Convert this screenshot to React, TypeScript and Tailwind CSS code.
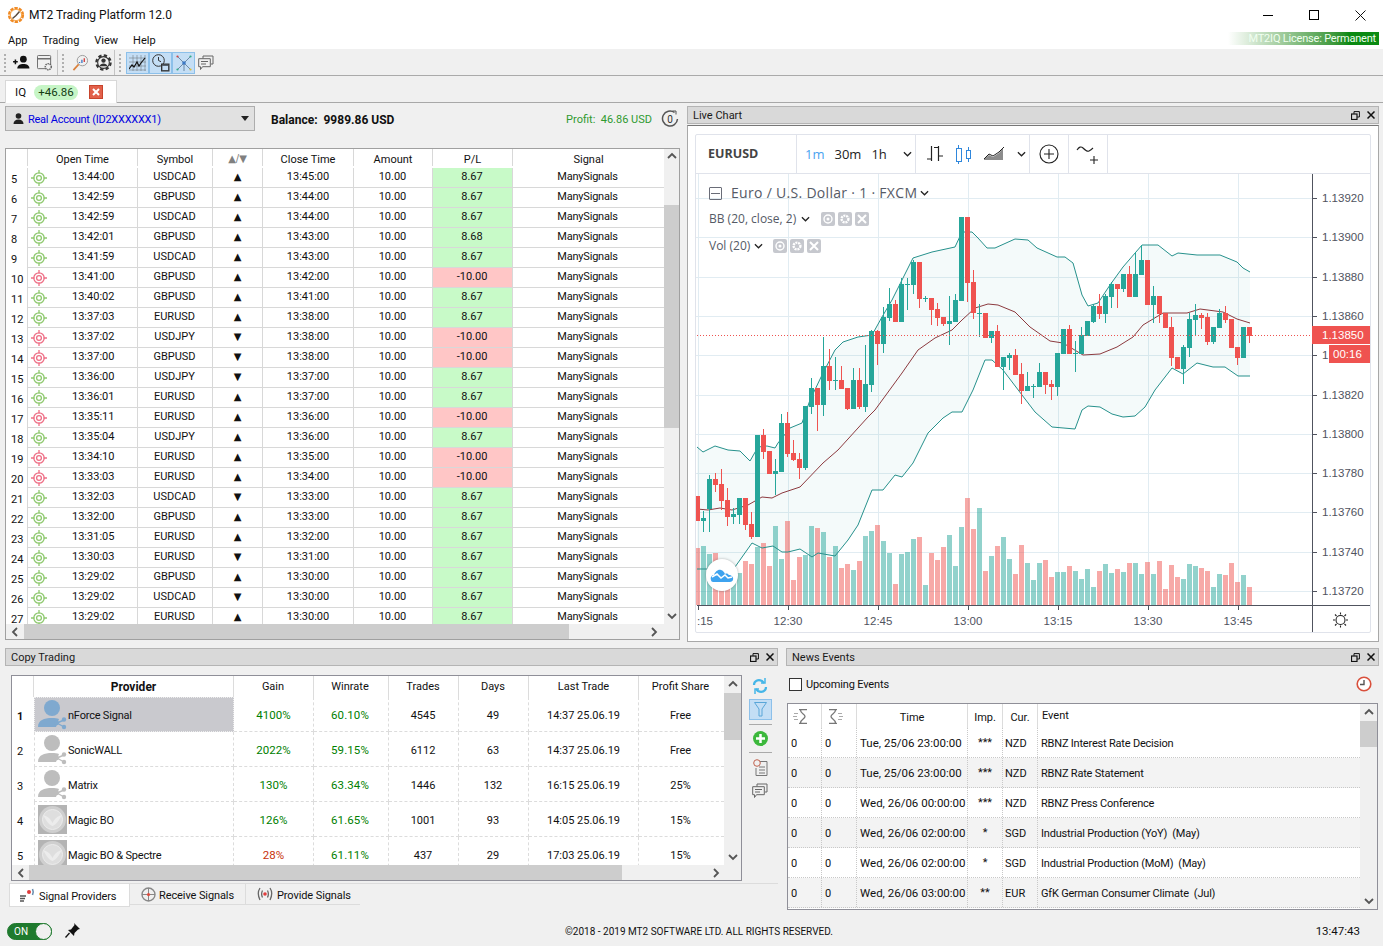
import React from "react";

const trades: [number, string, string, boolean, string, string][] = [
  [5, "13:44:00", "USDCAD", true, "13:45:00", "8.67"],
  [6, "13:42:59", "GBPUSD", true, "13:44:00", "8.67"],
  [7, "13:42:59", "USDCAD", true, "13:44:00", "8.67"],
  [8, "13:42:01", "GBPUSD", true, "13:43:00", "8.68"],
  [9, "13:41:59", "USDCAD", true, "13:43:00", "8.67"],
  [10, "13:41:00", "GBPUSD", true, "13:42:00", "-10.00"],
  [11, "13:40:02", "GBPUSD", true, "13:41:00", "8.67"],
  [12, "13:37:03", "EURUSD", true, "13:38:00", "8.67"],
  [13, "13:37:02", "USDJPY", false, "13:38:00", "-10.00"],
  [14, "13:37:00", "GBPUSD", false, "13:38:00", "-10.00"],
  [15, "13:36:00", "USDJPY", false, "13:37:00", "8.67"],
  [16, "13:36:01", "EURUSD", true, "13:37:00", "8.67"],
  [17, "13:35:11", "EURUSD", true, "13:36:00", "-10.00"],
  [18, "13:35:04", "USDJPY", true, "13:36:00", "8.67"],
  [19, "13:34:10", "EURUSD", true, "13:35:00", "-10.00"],
  [20, "13:33:03", "EURUSD", true, "13:34:00", "-10.00"],
  [21, "13:32:03", "USDCAD", false, "13:33:00", "8.67"],
  [22, "13:32:00", "GBPUSD", true, "13:33:00", "8.67"],
  [23, "13:31:05", "EURUSD", true, "13:32:00", "8.67"],
  [24, "13:30:03", "EURUSD", false, "13:31:00", "8.67"],
  [25, "13:29:02", "GBPUSD", true, "13:30:00", "8.67"],
  [26, "13:29:02", "USDCAD", false, "13:30:00", "8.67"],
  [27, "13:29:02", "EURUSD", true, "13:30:00", "8.67"],
];

const providers = [
  { n: 1, name: "nForce Signal", gain: "4100%", win: "60.10%", trades: "4545", days: "49", last: "14:37 25.06.19", share: "Free", pic: "blue", gainCls: "text-[#008000]" },
  { n: 2, name: "SonicWALL", gain: "2022%", win: "59.15%", trades: "6112", days: "63", last: "14:37 25.06.19", share: "Free", pic: "gray", gainCls: "text-[#008000]" },
  { n: 3, name: "Matrix", gain: "130%", win: "63.34%", trades: "1446", days: "132", last: "16:15 25.06.19", share: "25%", pic: "gray", gainCls: "text-[#008000]" },
  { n: 4, name: "Magic BO", gain: "126%", win: "61.65%", trades: "1001", days: "93", last: "14:05 25.06.19", share: "15%", pic: "magic", gainCls: "text-[#008000]" },
  { n: 5, name: "Magic BO & Spectre", gain: "28%", win: "61.11%", trades: "437", days: "29", last: "17:03 25.06.19", share: "15%", pic: "magic", gainCls: "text-[#c8320a]" },
];

const news = [
  ["Tue, 25/06 23:00:00", "***", "NZD", "RBNZ Interest Rate Decision"],
  ["Tue, 25/06 23:00:00", "***", "NZD", "RBNZ Rate Statement"],
  ["Wed, 26/06 00:00:00", "***", "NZD", "RBNZ Press Conference"],
  ["Wed, 26/06 02:00:00", "*", "SGD", "Industrial Production (YoY)  (May)"],
  ["Wed, 26/06 02:00:00", "*", "SGD", "Industrial Production (MoM)  (May)"],
  ["Wed, 26/06 03:00:00", "**", "EUR", "GfK German Consumer Climate  (Jul)"],
];

// candles: body top, body bottom, wick top, wick bottom, up?
const candles: [number, number, number, number, number][] = [
  [496, 521, 496, 521, 0], [518, 521, 511, 532, 1], [479, 509, 475, 532, 1], [479, 485, 473, 492, 0], [484, 501, 469, 510, 0],
  [500, 517, 488, 526, 0], [514, 517, 508, 524, 1], [498, 515, 498, 524, 1], [498, 525, 498, 530, 0], [524, 537, 512, 539, 0],
  [435, 537, 435, 537, 1], [435, 452, 429, 459, 0], [451, 474, 451, 474, 0], [471, 474, 459, 495, 1], [423, 472, 414, 472, 1],
  [423, 454, 412, 457, 0], [453, 460, 440, 461, 0], [459, 468, 453, 479, 0], [406, 468, 406, 470, 1], [388, 407, 378, 414, 1],
  [388, 405, 388, 431, 0], [366, 405, 337, 416, 1], [366, 381, 349, 390, 0], [380, 381, 357, 390, 1], [380, 389, 366, 389, 0],
  [388, 409, 388, 410, 0], [380, 409, 368, 409, 1], [380, 407, 368, 409, 0], [384, 407, 345, 412, 1], [331, 385, 330, 392, 1],
  [331, 344, 330, 365, 0], [317, 344, 307, 353, 1], [304, 318, 288, 321, 1], [304, 322, 300, 322, 0], [284, 322, 278, 322, 1],
  [284, 285, 278, 310, 1], [262, 285, 260, 294, 1], [262, 299, 262, 308, 0], [298, 299, 296, 302, 1], [298, 310, 298, 325, 0],
  [309, 318, 303, 326, 0], [317, 324, 317, 326, 0], [321, 324, 296, 345, 1], [300, 322, 294, 322, 1], [217, 301, 217, 301, 1],
  [217, 283, 217, 302, 0], [282, 313, 270, 319, 0], [313, 314, 304, 337, 1], [313, 338, 313, 338, 0], [331, 338, 331, 343, 1],
  [331, 367, 325, 367, 0], [357, 367, 357, 390, 1], [355, 358, 353, 370, 1], [355, 375, 349, 375, 0], [374, 391, 363, 404, 0],
  [386, 391, 372, 391, 1], [386, 387, 384, 398, 1], [372, 387, 363, 387, 1], [372, 385, 372, 394, 0], [384, 387, 380, 400, 0],
  [353, 387, 353, 396, 1], [329, 354, 329, 354, 1], [329, 354, 325, 354, 0], [353, 354, 341, 372, 1], [335, 354, 327, 354, 1],
  [321, 336, 321, 336, 1], [306, 322, 304, 323, 1], [306, 314, 294, 319, 0], [296, 314, 294, 323, 1], [284, 297, 282, 308, 1],
  [284, 289, 284, 308, 0], [274, 289, 274, 292, 1], [274, 297, 266, 297, 0], [274, 297, 252, 297, 1], [260, 275, 245, 275, 1],
  [260, 305, 260, 305, 0], [296, 305, 286, 323, 1], [296, 314, 296, 323, 0], [313, 328, 313, 328, 0], [327, 358, 317, 366, 0],
  [357, 369, 357, 369, 0], [347, 369, 345, 384, 1], [319, 348, 313, 357, 1], [315, 320, 304, 336, 1], [315, 318, 313, 329, 0],
  [317, 342, 313, 345, 0], [327, 342, 327, 344, 1], [313, 328, 309, 328, 1], [313, 320, 306, 323, 0], [319, 348, 319, 348, 0],
  [347, 358, 347, 365, 0], [327, 358, 327, 358, 1], [327, 336, 327, 343, 0],
];

const volumeTops = [
  548, 546, 554, 553, 570, 573, 573, 573, 561, 564, 547, 543, 566, 526, 559, 521, 580, 557, 555, 526, 528, 532, 557, 546, 568,
  564, 570, 561, 536, 531, 525, 541, 553, 584, 554, 552, 539, 537, 585, 553, 560, 547, 535, 566, 527, 498, 529, 508, 571, 556,
  546, 537, 559, 574, 545, 563, 580, 563, 560, 577, 572, 572, 566, 571, 579, 569, 587, 571, 564, 573, 569, 572, 563, 563, 574,
  562, 574, 561, 589, 565, 577, 579, 564, 566, 568, 571, 587, 574, 575, 563, 582, 575, 587,
];

const upper = "697,447 703,452 715,446 728,450 740,451 750,461 758,447 767,446 775,448 778,443 790,428 802,423 810,400 823,373 835,350 843,342 858,337 872,335 882,317 892,300 902,280 913,258 932,252 955,247 962,232 972,232 978,238 987,248 995,248 1015,239 1028,240 1037,248 1057,257 1065,257 1073,263 1082,295 1088,306 1098,303 1110,285 1123,267 1142,245 1158,245 1172,256 1178,253 1197,255 1220,255 1237,262 1243,268 1250,272";
const lower = "697,569 710,569 735,567 752,543 762,548 773,546 782,552 788,552 800,549 812,557 818,553 835,556 848,540 858,525 872,490 883,490 895,475 902,477 913,463 928,433 943,418 952,412 962,412 973,390 985,360 992,360 1003,370 1022,395 1035,412 1052,427 1075,429 1082,410 1088,406 1100,407 1112,414 1123,417 1135,416 1145,407 1155,390 1172,368 1183,374 1197,363 1213,367 1225,367 1238,376 1250,376";
const middle = "697,509 708,510 720,508 732,510 748,505 762,497 772,498 782,493 800,487 823,463 838,450 868,417 875,410 902,373 918,350 935,338 952,330 962,320 975,308 988,304 998,305 1015,312 1030,327 1050,341 1063,343 1083,355 1100,354 1117,347 1133,337 1143,325 1163,313 1187,313 1200,309 1223,312 1237,319 1250,323";
const bandFill = upper + " " + lower.split(" ").reverse().join(" ");

const priceTicks: [number, string][] = [
  [198, "1.13920"], [237, "1.13900"], [277, "1.13880"], [316, "1.13860"], [355, "1."], [395, "1.13820"],
  [434, "1.13800"], [473, "1.13780"], [512, "1.13760"], [552, "1.13740"], [591, "1.13720"],
];
const timeTicks: [number, string][] = [
  [698, ":15"], [788, "12:30"], [878, "12:45"], [968, "13:00"], [1058, "13:15"], [1148, "13:30"], [1238, "13:45"],
];

const Target = ({ color }: { color: string }) => (
  <svg width="16" height="16" viewBox="0 0 16 16" fill="none" stroke={color} strokeWidth="1.3">
    <circle cx="8" cy="8" r="5.2" />
    <circle cx="8" cy="8" r="2.4" />
    <path d="M8 0v3.5M8 12.5V16M0 8h3.5M12.5 8H16" />
  </svg>
);

const FloatClose = () => (
  <div className="flex items-center gap-[7px]">
    <svg width="9" height="9" viewBox="0 0 9 9" fill="none" stroke="#111">
      <rect x="0.5" y="3" width="5.5" height="5.5" strokeWidth="1.2" />
      <path d="M3 2.800V.6h5.400v5.400H6.200" />
    </svg>
    <svg width="8" height="8" viewBox="0 0 8 8" stroke="#111" strokeWidth="1.5">
      <path d="M.5.5l7 7M7.500.5l-7 7" />
    </svg>
  </div>
);

const PanelTitle = ({ title }: { title: string }) => (
  <div className="h-[18px] bg-[#d9d9d9] border border-[#b4b4b4] flex items-center justify-between pl-[5px] pr-[3px] text-[#1a1a1a]">
    <span className="pt-[1px]">{title}</span>
    <FloatClose />
  </div>
);

const Chevron = ({ dir }: { dir: "up" | "down" | "left" | "right" }) => {
  const d = { up: "M2 7l4-4 4 4", down: "M2 4l4 4 4-4", left: "M8 2L4 6l4 4", right: "M4 2l4 4-4 4" }[dir];
  return (
    <svg width="12" height="12" viewBox="0 0 12 12" fill="none" stroke="#555" strokeWidth="1.8">
      <path d={d} />
    </svg>
  );
};

const Grip = () => <span className="h-[18px] w-0 border-l-2 border-dotted border-[#b0b0b0]" />;

const Logo = () => (
  <svg width="18" height="18" viewBox="0 0 18 18">
    <circle cx="9" cy="9" r="6.6" fill="none" stroke="#f08a24" strokeWidth="3" strokeDasharray="3.2 1" />
    <circle cx="9" cy="9" r="5.6" fill="#fff" stroke="#f6a64c" strokeWidth="1" />
    <path d="M5.500 12.500L9 9.500l3.500-4" stroke="#5a4a3c" strokeWidth="1.5" fill="none" />
  </svg>
);

const AddUser = () => (
  <svg width="17" height="15" viewBox="0 0 18 16" fill="#111">
    <circle cx="11" cy="4.500" r="3.600" />
    <path d="M4.500 14.500c0-3.600 3-5 6.500-5s6.500 1.400 6.500 5z" />
    <path d="M0 6.500h5v1.600H0zM1.700 4.800h1.600v5H1.700z" />
  </svg>
);

const WindowGear = () => (
  <svg width="16" height="16" viewBox="0 0 17 17" fill="none" stroke="#666">
    <rect x="0.5" y="0.5" width="14" height="14" rx="1" />
    <path d="M0.500 4h14" strokeWidth="1.500" />
    <circle cx="12" cy="12.500" r="3.200" fill="#f0f0f0" strokeWidth="1.600" strokeDasharray="1.500 .8" />
  </svg>
);

const SearchChart = () => (
  <svg width="17" height="17" viewBox="0 0 18 18" fill="none">
    <circle cx="11" cy="7" r="5.500" stroke="#999" />
    <path d="M7 11l-5.500 6" stroke="#d9803c" strokeWidth="1.800" />
    <path d="M8 8.500v1M10.500 6v3.500" stroke="#3b78c4" strokeWidth="1.400" />
    <path d="M13 4.500v4" stroke="#d43c3c" strokeWidth="1.400" />
  </svg>
);

const UserGear = () => (
  <svg width="17" height="17" viewBox="0 0 18 18">
    <circle cx="9" cy="9" r="7.500" fill="none" stroke="#333" strokeWidth="2.400" strokeDasharray="3.500 2.400" />
    <circle cx="9" cy="9" r="6.200" fill="#f0f0f0" stroke="#333" strokeWidth="1.200" />
    <circle cx="9" cy="7" r="2.300" fill="#333" />
    <path d="M4.800 13c.6-2 2.200-3 4.200-3s3.600 1 4.200 3z" fill="#333" />
  </svg>
);

const ChartBtn = () => (
  <svg width="17" height="16" viewBox="0 0 17 16" fill="none">
    <path d="M4 0v16M8 0v16M12 0v16M16 0v16M0 3h17M0 7h17M0 11h17M0 15h17" stroke="#777d85" strokeWidth=".6" />
    <path d="M0 14l3-4 2 2 3-5 2 4 2-3 4-5" stroke="#111" strokeWidth="1.200" />
  </svg>
);

const ClockBtn = () => (
  <svg width="18" height="18" viewBox="0 0 18 18" fill="none" stroke="#333">
    <circle cx="6.500" cy="6.500" r="5.800" strokeWidth="1" />
    <path d="M6.500 3v3.500l2.500 1.200" />
    <rect x="9.500" y="10" width="7.500" height="7" fill="#56626e" stroke="#333" />
    <rect x="10.500" y="12" width="5.500" height="4" fill="#c4def5" stroke="none" />
  </svg>
);

const NetBtn = () => (
  <svg width="18" height="18" viewBox="0 0 18 18" fill="none">
    <path d="M2 2l14 14M16 2L2 16M9 9v8" stroke="#6d89a6" strokeWidth="1" />
    <circle cx="9" cy="9" r="1.800" fill="#3b78c4" />
    <circle cx="2.500" cy="2.500" r="1.100" fill="#c44" />
    <circle cx="15.500" cy="2.500" r="1.100" fill="#3a8" />
    <circle cx="2.500" cy="15.500" r="1.100" fill="#3a8" />
    <circle cx="15.500" cy="15.500" r="1.100" fill="#db3" />
  </svg>
);

const ChatIcon = ({ size = 16 }: { size?: number }) => (
  <svg width={size} height={size} viewBox="0 0 16 16" fill="none" stroke="#666">
    <path d="M5 3.500V1h10v8h-2" />
    <path d="M.7 3.700h11.600v8H4.500L2.500 14.500v-2.800H.7z" fill="#f0f0f0" />
    <path d="M3 6.500h7M3 9h5" />
  </svg>
);

const TrashTile = ({ kind }: { kind: "eye" | "gear" | "x" }) => (
  <span className="w-[14px] h-[14px] rounded-[2px] bg-[#c6c8ce] flex items-center justify-center">
    <svg width="12" height="12" viewBox="0 0 12 12" fill="none" stroke="#fff" strokeWidth="2">
      {kind === "eye" && <><circle cx="6" cy="6" r="4" strokeWidth="1.400" /><circle cx="6" cy="6" r="1.500" fill="#fff" stroke="none" /></>}
      {kind === "gear" && <circle cx="6" cy="6" r="3.400" strokeWidth="2.400" strokeDasharray="2 .8" />}
      {kind === "x" && <path d="M2 2l8 8M10 2l-8 8" />}
    </svg>
  </span>
);

const Caret = () => (
  <svg width="9" height="6" viewBox="0 0 10 6" fill="none" stroke="#222" strokeWidth="1.400">
    <path d="M1 1l4 4 4-4" />
  </svg>
);

const ProviderPic = ({ kind }: { kind: string }) => {
  if (kind === "magic") {
    return (
      <svg width="29" height="29" viewBox="0 0 29 29" className="shrink-0">
        <rect width="29" height="29" fill="#b4b4b4" />
        <circle cx="14.500" cy="14.500" r="13.500" fill="#cfcfcf" />
        <circle cx="14.500" cy="14.500" r="10" fill="#dedede" stroke="#ececec" />
        <path d="M5 10c4 1 7 3 9.500 8 2.500-5 5.500-7 9.500-8-3 5-5 9-9.500 11C10 19 8 15 5 10z" fill="#ececec" />
      </svg>
    );
  }
  const c = kind === "blue" ? "#7fa9cf" : "#bdbdbd";
  return (
    <svg width="29" height="31" viewBox="0 0 29 31" fill={c} className="shrink-0">
      <circle cx="14" cy="9" r="8" />
      <path d="M0 28c0-7 6-9 14-9 3 0 5 .3 7 1l-3 8z" />
      <path d="M19 24l7-3M19 24l7 4" stroke={c} strokeWidth="1.400" />
      <circle cx="18.500" cy="24" r="2.400" />
      <circle cx="26" cy="20.500" r="2.200" />
      <circle cx="26" cy="28" r="2.200" />
    </svg>
  );
};

const Hourglass = ({ flip }: { flip?: boolean }) => (
  <svg width="16" height="15" viewBox="0 0 16 15" fill="none" stroke="#777" className={flip ? "-scale-x-100" : ""}>
    <path d="M6 .5h8M6 14.500h8M7.500 1c0 4 4.500 4 4.500 6.500S7.500 10 7.500 14" strokeWidth="1.300" />
    <path d="M0 7.500h4M1 4.500h4M1 10.500h4" stroke="#aaa" />
  </svg>
);

function CandleChart() {
  return (
    <svg width="674" height="458" viewBox="696 174 674 458" className="block font-['Liberation_Sans',sans-serif]">
      <g stroke="#e1ecf2" strokeWidth="1">
        {priceTicks.map(([y]) => <path key={y} d={`M696 ${y + 0.5}H1312`} />)}
        {timeTicks.map(([x]) => <path key={x} d={`M${x + 0.5} 174V605`} />)}
      </g>
      <polygon points={bandFill} fill="#26a69a" fillOpacity="0.05" />
      {volumeTops.map((top, i) => (
        <rect key={i} x={695 + 6 * i} y={top} width="5" height={605 - top} fill={candles[i][4] ? "#26a69a" : "#ef5350"} fillOpacity="0.5" />
      ))}
      <polyline points={upper} fill="none" stroke="#26918c" strokeWidth="1" />
      <polyline points={lower} fill="none" stroke="#26918c" strokeWidth="1" />
      <polyline points={middle} fill="none" stroke="#8c3a3f" strokeWidth="1" />
      {candles.map(([top, bottom, wt, wb, up], i) => {
        const c = up ? "#26a69a" : "#ef5350";
        return (
          <g key={i} fill={c}>
            <rect x={697 + 6 * i} y={wt} width="1" height={wb - wt} />
            <rect x={695 + 6 * i} y={top} width="5" height={Math.max(bottom - top, 1)} />
          </g>
        );
      })}
      <path d="M697 335.500H1312" stroke="#ef5350" strokeDasharray="1 2" />
      <path d="M1312.500 174V632M697 605.500H1370" stroke="#50535e" />
      {priceTicks.map(([y, t]) => (
        <g key={t}>
          <path d={`M1312 ${y + 0.5}h5`} stroke="#50535e" />
          <text x="1322" y={y + 3.500} fontSize="11.500" fill="#50535e">{t}</text>
        </g>
      ))}
      {timeTicks.map(([x, t]) => (
        <g key={t}>
          <path d={`M${x + 0.5} 605v5`} stroke="#50535e" />
          <text x={t === ":15" ? 697 : x} y="625" fontSize="11.500" fill="#50535e" textAnchor={t === ":15" ? "start" : "middle"}>{t}</text>
        </g>
      ))}
      <rect x="1312" y="326" width="58" height="18" fill="#ef5350" />
      <text x="1322" y="339" fontSize="11.500" fill="#fff">1.13850</text>
      <rect x="1329" y="345" width="41" height="18" fill="#ef5350" />
      <text x="1333" y="358" fontSize="11.500" fill="#fff">00:16</text>
      <g fill="none" stroke="#222" strokeWidth="1.100">
        <circle cx="1340.500" cy="620" r="4.500" />
        <path d="M1340.500 612.500v2M1340.500 625.500v2M1333 620h2M1346 620h2M1335 614.500l1.500 1.500M1346 614.500l-1.500 1.500M1335 625.500l1.500-1.500M1346 625.500l-1.500-1.500" />
      </g>
    </svg>
  );
}

export default function App() {
  return (
    <div className="w-[1383px] h-[946px] overflow-hidden flex flex-col bg-[#f0f0f0] font-['Roboto',sans-serif] text-[11px] leading-none text-[#111]">
      {/* title + menu */}
      <div className="h-[30px] bg-white flex items-center">
        <div className="ml-[7px] mr-[4px]"><Logo /></div>
        <span className="text-[12px]">MT2 Trading Platform 12.0</span>
        <div className="ml-auto flex items-center">
          <span className="w-[46px] flex justify-center"><span className="w-[10px] h-px bg-black" /></span>
          <span className="w-[46px] flex justify-center"><span className="w-[10px] h-[10px] border border-black" /></span>
          <span className="w-[46px] flex justify-center">
            <svg width="11" height="11" viewBox="0 0 11 11" stroke="#111"><path d="M.5.5l10 10M10.500.5l-10 10" /></svg>
          </span>
        </div>
      </div>
      <div className="h-[19px] bg-white flex items-center pl-[8px] pt-[2px] gap-[15px] relative">
        <span>App</span><span>Trading</span><span>View</span><span>Help</span>
        <div className="absolute right-[4px] top-[2px] h-[13px] w-[151px] bg-gradient-to-r from-white to-[#0a8a12] to-[80%] text-[#f0fff0] text-right pr-[3px] leading-[13px] tracking-[-0.2px]">MT2IQ License: Permanent</div>
      </div>
      {/* toolbar */}
      <div className="h-[26px] mt-px border-b border-[#aaa] flex items-center">
        <div className="flex items-center pl-[4px] w-[58px] h-full border-r border-[#c4c4c4]">
          <Grip />
          <span className="ml-[7px] mr-[7px]"><AddUser /></span>
          <WindowGear />
        </div>
        <div className="flex items-center pl-[4px] w-[57px] h-full border-r border-[#c4c4c4]">
          <Grip />
          <span className="ml-[8px] mr-[6px]"><SearchChart /></span>
          <UserGear />
        </div>
        <div className="flex items-center pl-[4px]">
          <Grip />
          <span className="ml-[5px] w-[23px] h-[22px] bg-[#c4def5] border border-[#8cc0ea] flex items-center justify-center"><ChartBtn /></span>
          <span className="w-[23px] h-[22px] bg-[#c4def5] border border-[#8cc0ea] flex items-center justify-center"><ClockBtn /></span>
          <span className="w-[23px] h-[22px] bg-[#c4def5] border border-[#8cc0ea] flex items-center justify-center"><NetBtn /></span>
          <span className="w-[22px] h-[22px] flex items-center justify-center"><ChatIcon /></span>
        </div>
      </div>
      {/* tab strip */}
      <div className="h-[27px] border-b border-[#a8a8a8] flex items-end pl-[5px]">
        <div className="w-[112px] h-[23px] bg-white border-x border-t border-[#d8d8d8] flex items-center pl-[9px] -mb-px">
          <span className="w-[12px] pt-[2px] text-[11.500px]">IQ</span>
          <span className="ml-[7px] h-[15px] w-[44px] rounded-full bg-[#c6f5c6] flex items-center justify-center pt-[1px] text-[#143c14] text-[11.500px]">+46.86</span>
          <span className="ml-[11px] w-[14px] h-[14px] bg-[#e2604a] border border-[#c8442c] flex items-center justify-center">
            <svg width="8" height="8" viewBox="0 0 8 8" stroke="#fff" strokeWidth="2"><path d="M1 1l6 6M7 1L1 7" /></svg>
          </span>
        </div>
      </div>

      {/* top row */}
      <div className="h-[540px] flex pl-[5px]">
        <div className="w-[675px] pt-[3px] mr-[7px]">
          <div className="flex items-center h-[25px]">
            <div className="w-[250px] h-full bg-[#e1e1e1] border border-[#adadad] flex items-center pl-[7px] text-[#0000e0]">
              <svg width="11" height="11" viewBox="0 0 11 11" fill="#222" className="mr-[4px]"><circle cx="5.500" cy="3" r="2.800" /><path d="M.5 11c0-3 2-4.500 5-4.500s5 1.500 5 4.500z" /></svg>
              <span className="pt-[2px] tracking-[-0.25px]">Real Account (ID2XXXXXX1)</span>
              <span className="ml-auto mr-[5px] border-x-[4px] border-x-transparent border-t-[5px] border-t-[#222]" />
            </div>
            <span className="ml-[16px] pt-[2px] font-bold text-[12px]">Balance:&nbsp; 9989.86 USD</span>
            <span className="ml-auto pt-[2px] text-[#2f9a2f]">Profit:&nbsp; 46.86 USD</span>
            <svg width="18" height="18" viewBox="0 0 18 18" fill="none" stroke="#555" className="ml-[9px] mr-[1px]">
              <path d="M13.500 2.500A7.500 7.500 0 1 0 16.500 9" strokeWidth="1.500" />
              <path d="M11.500 1h3.500v3.500" strokeWidth="1" />
              <text x="9" y="12.500" fontSize="10" textAnchor="middle" fill="#333" stroke="none">0</text>
            </svg>
          </div>
          <div className="mt-[17px] h-[492px] border border-[#a0a0a0] bg-white flex flex-col overflow-hidden">
            <div className="flex-1 flex min-h-0">
              <div className="flex-1 overflow-hidden">
                <div className="flex h-[19px] items-end pb-[2px]">
                  <span className="w-[22px] self-stretch border-r border-[#d8d8d8]" />
                  <span className="w-[110px] text-center self-stretch border-r border-[#d8d8d8] pt-[5px]">Open Time</span>
                  <span className="w-[75px] text-center self-stretch border-r border-[#d8d8d8] pt-[5px]">Symbol</span>
                  <span className="w-[50px] text-center self-stretch border-r border-[#d8d8d8] pt-[5px] text-[#808080] font-['DejaVu_Sans',sans-serif] text-[10px]">▲/▼</span>
                  <span className="w-[91px] text-center self-stretch border-r border-[#d8d8d8] pt-[5px]">Close Time</span>
                  <span className="w-[79px] text-center self-stretch border-r border-[#d8d8d8] pt-[5px]">Amount</span>
                  <span className="w-[80px] text-center self-stretch border-r border-[#d8d8d8] pt-[5px]">P/L</span>
                  <span className="w-[151px] text-center self-stretch pt-[5px]">Signal</span>
                </div>
                {trades.map(([n, open, sym, up, close, pl]) => (
                  <div key={n} className="flex h-[20px] leading-[18px]">
                    <span className="w-[22px] pl-[5px] pt-[6px] leading-[11px] border-r border-[#d8d8d8]">{n}</span>
                    <span className="w-[110px] border-r border-b border-[#d8d8d8] flex">
                      <span className="ml-[3px] mt-[2px] w-[16px]"><Target color={pl.startsWith("-") ? "#ee6f86" : "#8fc96f"} /></span>
                      <span className="ml-[25px]">{open}</span>
                    </span>
                    <span className="w-[75px] pr-[1px] text-center border-r border-b border-[#d8d8d8]">{sym}</span>
                    <span className="w-[50px] text-center border-r border-b border-[#d8d8d8] text-[10px] font-['DejaVu_Sans',sans-serif]">{up ? "▲" : "▼"}</span>
                    <span className="w-[91px] text-center border-r border-b border-[#d8d8d8]">{close}</span>
                    <span className="w-[79px] pr-[1px] text-center border-r border-b border-[#d8d8d8]">10.00</span>
                    <span className={`w-[80px] pr-[1px] text-center border-r border-b border-[#d8d8d8] ${pl.startsWith("-") ? "bg-[#ffc6c6]" : "bg-[#c8fac8]"}`}>{pl}</span>
                    <span className="w-[151px] pr-[2px] text-center border-b border-[#d8d8d8] tracking-[-0.2px]">ManySignals</span>
                  </div>
                ))}
              </div>
              <div className="w-[15px] bg-[#f0f0f0] flex flex-col items-center">
                <div className="h-[14px] mt-[1px] flex items-center"><Chevron dir="up" /></div>
                <div className="mt-[41px] w-full h-[223px] bg-[#cdcdcd]" />
                <div className="mt-auto h-[16px] flex items-center"><Chevron dir="down" /></div>
              </div>
            </div>
            <div className="h-[15px] bg-[#f0f0f0] flex items-center">
              <span className="w-[18px] flex justify-center"><Chevron dir="left" /></span>
              <span className="w-[545px] h-full bg-[#cdcdcd]" />
              <span className="ml-auto mr-[19px]"><Chevron dir="right" /></span>
            </div>
          </div>
        </div>

        <div className="w-[692px] pt-[3px]">
          <PanelTitle title="Live Chart" />
          <div className="mt-px h-[517px] border border-[#a8a8a8] border-t-[#777] bg-white pt-[8px] pl-[7px]">
            <div className="w-[676px] h-[499px] border border-[#e0e3eb] rounded-[2px] flex flex-col font-['Open_Sans',sans-serif]">
              <div className="h-[39px] border-b border-[#e0e3eb] flex items-stretch text-[13px] text-[#222]">
                <div className="w-[101px] border-r border-[#e0e3eb] flex items-center pl-[12px] font-bold text-[#444] text-[12.500px]">EURUSD</div>
                <div className="w-[119px] border-r border-[#e0e3eb] flex items-center pl-[8px] gap-[10px]">
                  <span className="text-[#4aa3f0]">1m</span><span>30m</span><span>1h</span>
                  <span className="ml-[6px]"><Caret /></span>
                </div>
                <div className="w-[114px] border-r border-[#e0e3eb] flex items-center pl-[10px]">
                  <svg width="78" height="20" viewBox="0 0 78 20" fill="none">
                    <path d="M5.500 2v15M1 15h4.500M12.500 2v15M8 3.500h4.500M12.500 12H17" stroke="#222" strokeWidth="1.200" />
                    <path d="M32.500 1v19M42.500 3v15" stroke="#2f87dc" />
                    <rect x="30.500" y="4.500" width="5" height="13" fill="#fff" stroke="#2f87dc" />
                    <rect x="40.500" y="6.500" width="4" height="8" fill="#fff" stroke="#2f87dc" />
                    <path d="M58 15l5-4 4 2 6-4 4-5v12H58z" fill="#8c8c8c" />
                    <path d="M58 15l5-5 4 2 6-4 5-5" stroke="#222" />
                  </svg>
                  <span className="ml-[13px]"><Caret /></span>
                </div>
                <div className="w-[39px] border-r border-[#e0e3eb] flex items-center justify-center">
                  <svg width="20" height="20" viewBox="0 0 20 20" fill="none" stroke="#222" strokeWidth="1.100"><circle cx="10" cy="10" r="9" /><path d="M10 5v10M5 10h10" /></svg>
                </div>
                <div className="w-[39px] border-r border-[#e0e3eb] flex items-center justify-center">
                  <svg width="24" height="20" viewBox="0 0 24 20" fill="none" stroke="#222" strokeWidth="1.100"><path d="M1 6c2-3 4-4 6-2s4 4 6 3 3-2 4-3" /><path d="M18 12v8M14 16h8" /></svg>
                </div>
              </div>
              <div className="relative flex-1">
                <CandleChart />
                <div className="absolute left-[13px] top-[12px] flex items-center text-[14px] text-[#555a66] tracking-[0.3px]">
                  <span className="w-[13px] h-[13px] border border-[#6a6d78] rounded-[1px] flex items-center justify-center mr-[9px]"><span className="w-[9px] h-px bg-[#6a6d78]" /></span>
                  <span className="whitespace-pre">Euro / U.S. Dollar · 1 · FXCM</span>
                  <span className="ml-[3px]"><Caret /></span>
                </div>
                <div className="absolute left-[13px] top-[38px] flex items-center text-[12px] text-[#555a66]">
                  <span>BB (20, close, 2)</span>
                  <span className="ml-[5px] mr-[11px]"><Caret /></span>
                  <span className="flex gap-[3px]"><TrashTile kind="eye" /><TrashTile kind="gear" /><TrashTile kind="x" /></span>
                </div>
                <div className="absolute left-[13px] top-[65px] flex items-center text-[12px] text-[#555a66]">
                  <span>Vol (20)</span>
                  <span className="ml-[4px] mr-[10px]"><Caret /></span>
                  <span className="flex gap-[3px]"><TrashTile kind="eye" /><TrashTile kind="gear" /><TrashTile kind="x" /></span>
                </div>
                <div className="absolute left-[10px] top-[385px] w-[32px] h-[32px] rounded-full bg-white shadow-[0_0_3px_rgba(0,0,0,0.3)] flex items-center justify-center">
                  <svg width="24" height="14" viewBox="0 0 24 14" fill="#3ea3ef">
                    <path d="M1 12c-1-3 1-5 3-5 1-3 4-6 7-5 2 .5 3 2 4 4 2-1 3 0 4 1 2 0 5 2 4 5-.5 1-2 2-3 2H3c-1 0-2-1-2-2z" />
                    <path d="M2 9l5-3 4 4 4-3 3 3 4-1" fill="none" stroke="#fff" strokeWidth="1.500" />
                  </svg>
                </div>
              </div>
            </div>
          </div>
        </div>
      </div>

      {/* bottom row */}
      <div className="h-[272px] flex pl-[5px] pt-[5px]">
        <div className="w-[773px] mr-[8px]">
          <PanelTitle title="Copy Trading" />
          <div className="flex mt-[9px] ml-[6px]">
            <div className="w-[731px] h-[206px] shrink-0 border border-[#8f8f98] bg-white flex flex-col overflow-hidden">
              <div className="flex-1 flex min-h-0">
                <div className="flex-1 overflow-hidden">
                  <div className="flex h-[21px] items-center">
                    <span className="w-[22px] self-stretch border-r border-[#dcdcdc]" />
                    <span className="w-[200px] text-center font-bold text-[12px] self-stretch pt-[5px] border-r border-[#dcdcdc]">Provider</span>
                    <span className="w-[80px] pr-[1px] text-center self-stretch pt-[5px] border-r border-[#dcdcdc]">Gain</span>
                    <span className="w-[75px] pr-[2px] text-center self-stretch pt-[5px] border-r border-[#dcdcdc]">Winrate</span>
                    <span className="w-[70px] pr-[1px] text-center self-stretch pt-[5px] border-r border-[#dcdcdc]">Trades</span>
                    <span className="w-[70px] pr-[1px] text-center self-stretch pt-[5px] border-r border-[#dcdcdc]">Days</span>
                    <span className="w-[110px] text-center self-stretch pt-[5px] border-r border-[#dcdcdc]">Last Trade</span>
                    <span className="w-[85px] pr-[2px] text-center self-stretch pt-[5px]">Profit Share</span>
                  </div>
                  {providers.map((p) => (
                    <div key={p.n} className="flex h-[35px] items-stretch">
                      <span className={`w-[22px] pl-[5px] pt-[3px] flex items-center ${p.n === 1 ? "font-bold" : ""}`}>{p.n}</span>
                      <span className={`w-[200px] flex items-center gap-[1px] pl-[3px] overflow-hidden ${p.n === 1 ? "bg-[#c9c9ce] border border-dotted border-[#eee]" : "border-x border-b border-dashed border-[#dcdcdc]"}`}>
                        <ProviderPic kind={p.pic} />
                        <span className="pt-[2px] tracking-[-0.2px]">{p.name}</span>
                      </span>
                      <span className={`w-[80px] pt-[3px] flex items-center justify-center text-[11.500px] border-r border-b border-dashed border-[#dcdcdc] ${p.gainCls}`}>{p.gain}</span>
                      <span className="w-[75px] pt-[3px] pr-[2px] flex items-center justify-center text-[11.500px] tracking-[0.1px] border-r border-b border-dashed border-[#dcdcdc] text-[#008000]">{p.win}</span>
                      <span className="w-[70px] pt-[3px] pr-[1px] flex items-center justify-center border-r border-b border-dashed border-[#dcdcdc]">{p.trades}</span>
                      <span className="w-[70px] pt-[3px] pr-[1px] flex items-center justify-center border-r border-b border-dashed border-[#dcdcdc]">{p.days}</span>
                      <span className="w-[110px] pt-[3px] flex items-center justify-center border-r border-b border-dashed border-[#dcdcdc]">{p.last}</span>
                      <span className="w-[85px] pt-[3px] pr-[2px] flex items-center justify-center border-b border-dashed border-[#dcdcdc]">{p.share}</span>
                    </div>
                  ))}
                </div>
                <div className="w-[17px] bg-[#f0f0f0] flex flex-col items-center">
                  <div className="h-[17px] flex items-center"><Chevron dir="up" /></div>
                  <div className="w-full h-[47px] bg-[#cdcdcd]" />
                  <div className="mt-auto h-[17px] flex items-center"><Chevron dir="down" /></div>
                </div>
              </div>
              <div className="h-[15px] bg-[#f0f0f0] flex items-center">
                <span className="w-[17px] flex justify-center"><Chevron dir="left" /></span>
                <span className="w-[593px] h-full bg-[#cdcdcd]" />
                <span className="ml-auto mr-[19px]"><Chevron dir="right" /></span>
              </div>
            </div>
            <div className="w-[36px] flex flex-col items-center">
              <svg width="16" height="18" viewBox="0 0 16 18" fill="none" stroke="#45b6e8" strokeWidth="2.200" className="mt-[2px]">
                <path d="M2 8c0-4 4-6 8-4l2 2M14 10c0 4-4 6-8 4l-2-2" />
                <path d="M13 1v5H9M3 17v-5h4" strokeWidth="1.500" />
              </svg>
              <span className="mt-[4px] w-[23px] h-[21px] bg-[#c4def5] border border-[#8cc0ea] flex items-center justify-center">
                <svg width="13" height="15" viewBox="0 0 13 15" fill="none" stroke="#5aa6d8"><path d="M.5.500h12L8 7v7H5V7z" /></svg>
              </span>
              <span className="mt-[4px] w-[23px] h-px bg-[#aaa]" />
              <span className="mt-[6px] w-[15px] h-[15px] rounded-full bg-[#3cb83c] text-white flex items-center justify-center">
                <svg width="9" height="9" viewBox="0 0 9 9" stroke="#fff" strokeWidth="2.500"><path d="M4.500 0v9M0 4.500h9" /></svg>
              </span>
              <span className="mt-[6px] w-[23px] h-px bg-[#aaa]" />
              <svg width="15" height="17" viewBox="0 0 15 17" fill="none" stroke="#777" className="mt-[6px]">
                <path d="M4 2.500h10v14H3V9M6 8h6M6 11h6M6 14h6" />
                <circle cx="4" cy="4" r="3.300" stroke="#c0604c" fill="#f0f0f0" />
              </svg>
              <span className="mt-[7px]"><ChatIcon size={16} /></span>
            </div>
          </div>
          <div className="flex mt-[2px] ml-[4px] h-[25px] relative">
            <div className="w-[121px] h-[24px] bg-white border border-[#dcdcdc] flex items-center pl-[10px] gap-[3px]">
              <svg width="16" height="14" viewBox="0 0 16 14" fill="none" stroke="#555" strokeWidth="1.600"><path d="M0 8h6M0 10.500h5M0 13h4" /><circle cx="9" cy="4" r="2" fill="#e03c3c" stroke="none" /><path d="M12.500 1c1 2 1 4 0 6" stroke="#6a8fb0" /></svg>
              <span className="pt-[3px] tracking-[-0.1px]">Signal Providers</span>
            </div>
            <div className="w-[116px] h-[22px] border-t border-r border-b border-[#dcdcdc] flex items-center pl-[11px] gap-[3px]">
              <svg width="15" height="15" viewBox="0 0 15 15" fill="none" stroke="#888"><circle cx="7.500" cy="7.500" r="6.500" strokeWidth="1.400" /><path d="M7.500 1v13M1 7.500h13" /><circle cx="7.500" cy="7.500" r="1.600" fill="#e04a3c" stroke="none" /></svg>
              <span className="pt-[3px] tracking-[-0.1px]">Receive Signals</span>
            </div>
            <div className="w-[114px] h-[22px] border-t border-b border-[#dcdcdc] flex items-center pl-[11px] gap-[4px]">
              <svg width="16" height="14" viewBox="0 0 16 14" fill="none" stroke="#666" strokeWidth="1.300"><path d="M3 1C1 4 1 9 3 13M13 1c2 3 2 8 0 12M5.500 3.500c-1 2-1 5 0 7M10.500 3.500c1 2 1 5 0 7" /><circle cx="8" cy="7" r="1.800" fill="#e03c3c" stroke="none" /></svg>
              <span className="pt-[3px] tracking-[-0.1px]">Provide Signals</span>
            </div>
            <div className="flex-1 h-px bg-[#dcdcdc]" />
          </div>
        </div>

        <div className="w-[593px]">
          <PanelTitle title="News Events" />
          <div className="h-[37px] flex items-center pl-[3px] pr-[7px] pb-[1px]">
            <span className="w-[13px] h-[13px] border border-[#333] bg-white mr-[4px]" />
            <span className="tracking-[-0.15px]">Upcoming Events</span>
            <svg width="16" height="16" viewBox="0 0 16 16" fill="none" className="ml-auto">
              <circle cx="8" cy="8" r="6.800" stroke="#d9503c" strokeWidth="1.600" fill="#fff" />
              <path d="M8 4v4.500H4" stroke="#555" strokeWidth="1.400" />
            </svg>
          </div>
          <div className="ml-[1px] w-[591px] h-[207px] border border-[#8f8f98] bg-white flex">
            <div className="flex-1 overflow-hidden">
              <div className="flex h-[24px]">
                <span className="w-[34px] border-r border-[#dcdcdc] flex items-center pl-[5px]"><Hourglass /></span>
                <span className="w-[35px] border-r border-[#dcdcdc] flex items-center pl-[5px]"><Hourglass flip /></span>
                <span className="w-[111px] border-r border-[#dcdcdc] text-center pt-[8px]">Time</span>
                <span className="w-[35px] border-r border-[#dcdcdc] text-center pt-[8px]">Imp.</span>
                <span className="w-[35px] border-r border-[#dcdcdc] text-center pt-[8px]">Cur.</span>
                <span className="pl-[4px] pt-[6px]">Event</span>
              </div>
              {news.map(([time, imp, cur, ev], i) => (
                <div key={i} className={`flex h-[30px] items-center border-b border-dotted border-[#c8c8c8] ${i % 2 ? "bg-[#f3f3f3]" : "bg-white"}`}>
                  <span className="w-[34px] self-stretch flex items-center pl-[3px] pt-[2px] border-r border-dotted border-[#c8c8c8]">0</span>
                  <span className="w-[35px] self-stretch flex items-center pl-[3px] pt-[2px] border-r border-dotted border-[#c8c8c8]">0</span>
                  <span className="w-[111px] self-stretch flex items-center pl-[3px] pt-[2px] border-r border-dotted border-[#c8c8c8] whitespace-nowrap text-[11.500px]">{time}</span>
                  <span className="w-[35px] self-stretch flex items-center justify-center border-r border-dotted border-[#c8c8c8]">{imp}</span>
                  <span className="w-[35px] self-stretch flex items-center pl-[2px] pt-[2px] border-r border-dotted border-[#c8c8c8]">{cur}</span>
                  <span className="pl-[3px] pt-[2px] whitespace-pre tracking-[-0.2px]">{ev}</span>
                </div>
              ))}
            </div>
            <div className="w-[17px] bg-[#f0f0f0] flex flex-col items-center">
              <div className="h-[17px] flex items-center"><Chevron dir="up" /></div>
              <div className="w-full h-[26px] bg-[#cdcdcd]" />
              <div className="mt-auto h-[17px] flex items-center"><Chevron dir="down" /></div>
            </div>
          </div>
        </div>
      </div>

      {/* status bar */}
      <div className="flex-1 flex items-center relative pl-[7px] pt-[2px]">
        <div className="w-[45px] h-[17px] rounded-full bg-[#1f7a2e] border border-[#1f7a2e] flex items-center relative text-white text-[10px] pl-[6px]">
          ON
          <span className="absolute right-[-1px] top-[-1px] w-[17px] h-[17px] rounded-full bg-[#f0f0f0] border border-[#1f7a2e]" />
        </div>
        <svg width="15" height="15" viewBox="0 0 15 15" fill="#111" className="ml-[13px] -mt-[3px]">
          <path d="M9 0l6 6-2 .5-3.500 3.500-.5 3-6-6 3-.5L9.500 2z" /><path d="M4.500 10L.5 14.500" stroke="#111" strokeWidth="1.300" />
        </svg>
        <span className="ml-[485px] pt-[1px] text-[10px]">©2018 - 2019 MT2 SOFTWARE LTD. ALL RIGHTS RESERVED.</span>
        <span className="ml-auto mr-[23px] text-[11.500px]">13:47:43</span>
      </div>
    </div>
  );
}
